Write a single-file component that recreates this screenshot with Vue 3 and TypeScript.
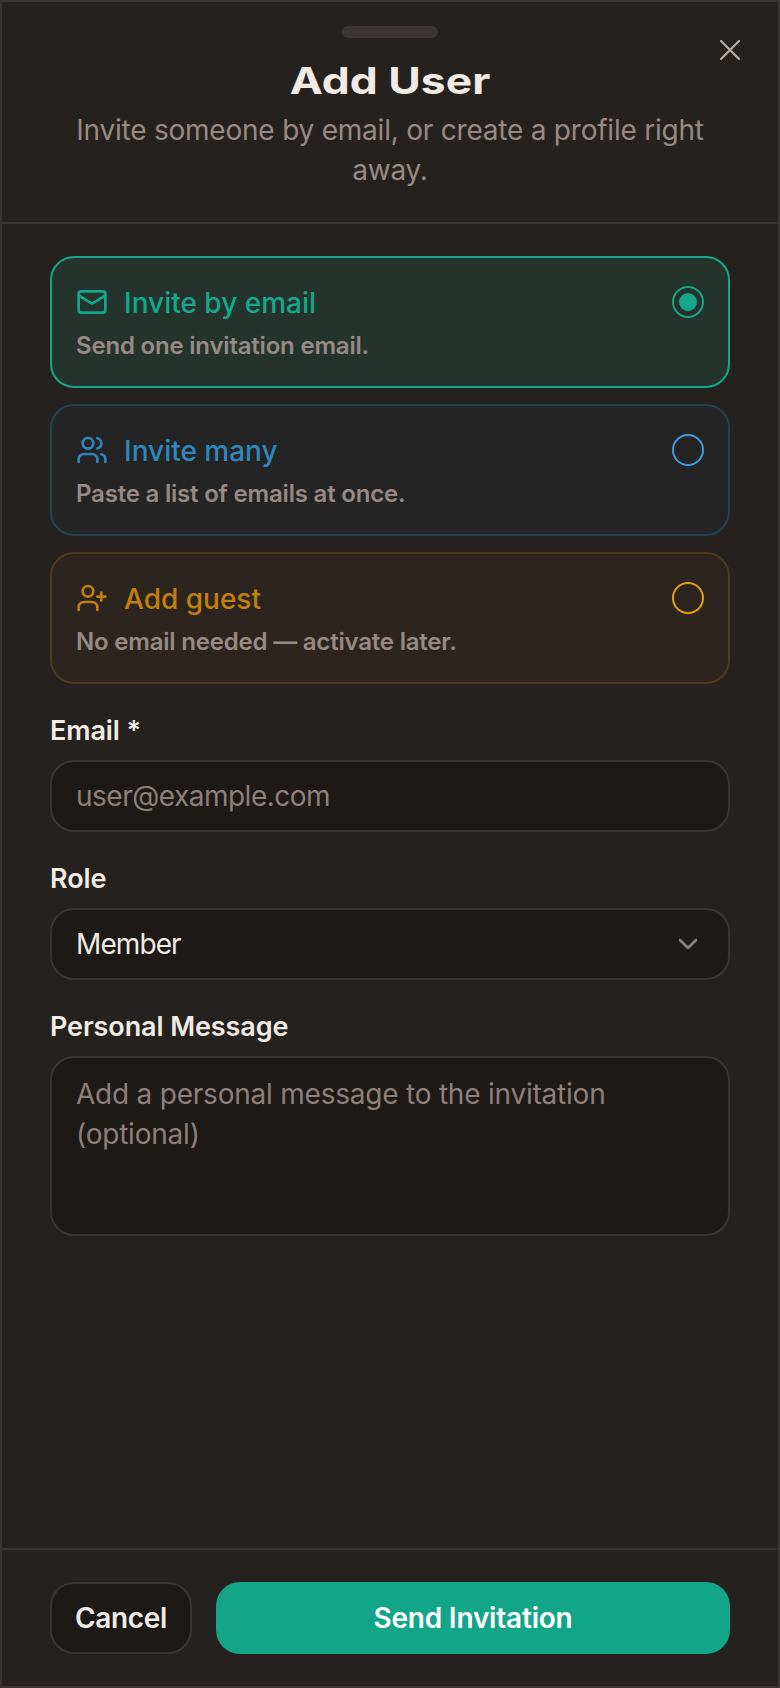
<template>
  <div class="sheet">
    <header class="sheet-header">
      <div class="handle"></div>
      <button class="close-btn" aria-label="Close">
        <svg viewBox="0 0 24 24" width="36" height="36" fill="none" stroke="currentColor" stroke-width="1.5" stroke-linecap="round">
          <path d="M18 6 6 18M6 6l12 12" />
        </svg>
      </button>
      <h1 class="title">Add User</h1>
      <p class="subtitle">Invite someone by email, or create a profile right away.</p>
    </header>

    <main class="sheet-body">
      <div class="modes">
        <div v-for="m in modes" :key="m.key" :class="['mode-card', m.key, { active: mode === m.key }]" @click="mode = m.key">
          <div class="mode-top">
            <svg class="mode-icon" viewBox="0 0 24 24" width="32" height="32" fill="none" stroke="currentColor" stroke-width="2" stroke-linecap="round" stroke-linejoin="round">
              <path v-for="d in m.paths" :key="d" :d="d" />
            </svg>
            <span class="mode-label">{{ m.label }}</span>
            <span class="radio"><span v-if="mode === m.key" class="radio-dot"></span></span>
          </div>
          <div class="mode-desc">{{ m.desc }}</div>
        </div>
      </div>

      <div class="field">
        <label class="field-label">Email *</label>
        <input class="control email-input" type="email" placeholder="user@example.com" />
      </div>

      <div class="field">
        <label class="field-label">Role</label>
        <div class="select-wrap">
          <select class="control select">
            <option>Member</option>
            <option>Admin</option>
          </select>
          <svg class="chevron" viewBox="0 0 24 24" width="32" height="32" fill="none" stroke="currentColor" stroke-width="2" stroke-linecap="round" stroke-linejoin="round">
            <path d="m6 9 6 6 6-6" />
          </svg>
        </div>
      </div>

      <div class="field">
        <label class="field-label">Personal Message</label>
        <textarea class="control textarea" placeholder="Add a personal message to the invitation (optional)"></textarea>
      </div>
    </main>

    <footer class="sheet-footer">
      <button class="btn cancel">Cancel</button>
      <button class="btn send">Send Invitation</button>
    </footer>
  </div>
</template>

<script setup lang="ts">
import { ref } from 'vue'

interface Mode {
  key: string
  label: string
  desc: string
  paths: string[]
}

const mode = ref('email')

const modes: Mode[] = [
  {
    key: 'email',
    label: 'Invite by email',
    desc: 'Send one invitation email.',
    paths: ['M4 4h16a2 2 0 0 1 2 2v12a2 2 0 0 1-2 2H4a2 2 0 0 1-2-2V6a2 2 0 0 1 2-2Z', 'm22 7-8.97 5.7a1.94 1.94 0 0 1-2.06 0L2 7']
  },
  {
    key: 'many',
    label: 'Invite many',
    desc: 'Paste a list of emails at once.',
    paths: ['M16 21v-2a4 4 0 0 0-4-4H6a4 4 0 0 0-4 4v2', 'M9 3a4 4 0 1 0 0 8 4 4 0 0 0 0-8Z', 'M22 21v-2a4 4 0 0 0-3-3.87', 'M16 3.13a4 4 0 0 1 0 7.75']
  },
  {
    key: 'guest',
    label: 'Add guest',
    desc: 'No email needed — activate later.',
    paths: ['M16 21v-2a4 4 0 0 0-4-4H6a4 4 0 0 0-4 4v2', 'M9 3a4 4 0 1 0 0 8 4 4 0 0 0 0-8Z', 'M19 8v6', 'M22 11h-6']
  }
]
</script>

<style>
body {
  margin: 0;
  background: #25211e;
}
</style>

<style scoped>
.sheet {
  box-sizing: border-box;
  width: 780px;
  height: 1688px;
  display: flex;
  flex-direction: column;
  background: #25211e;
  border: 2px solid #3a3532;
  font-family: Inter, "Noto Sans", sans-serif;
  color: #f0ebe5;
}

.sheet-header {
  position: relative;
  box-sizing: border-box;
  height: 222px;
  flex-shrink: 0;
  padding: 24px 48px 0;
  text-align: center;
  border-bottom: 2px solid #3a3532;
}

.handle {
  width: 96px;
  height: 12px;
  margin: 0 auto;
  border-radius: 6px;
  background: #3d3633;
}

.close-btn {
  position: absolute;
  top: 30px;
  right: 30px;
  width: 36px;
  height: 36px;
  padding: 0;
  border: none;
  background: none;
  color: #b4aca6;
}

.title {
  margin: 21px 0 0;
  font-size: 37px;
  line-height: 44px;
  font-weight: 700;
  color: #f0ebe5;
  transform: scaleX(1.2);
}

.subtitle {
  margin: 7px 0 0;
  font-size: 28px;
  line-height: 40px;
  letter-spacing: -0.22px;
  color: #978a84;
}

.sheet-body {
  flex: 1;
  padding: 32px 48px;
  display: flex;
  flex-direction: column;
  gap: 28px;
}

.modes {
  display: flex;
  flex-direction: column;
  gap: 16px;
}

.mode-card {
  box-sizing: border-box;
  height: 132px;
  padding: 28px 24px 0;
  border: 2px solid;
  border-radius: 24px;
}

.mode-card.email {
  background: #25332d;
  border-color: #14a88a;
  color: #14a88a;
}

.mode-card.many {
  background: #242424;
  border-color: #23404f;
  color: #2d87bd;
}

.mode-card.guest {
  background: #2c241e;
  border-color: #4f3a1c;
  color: #c27f0e;
}

.mode-top {
  display: flex;
  align-items: center;
  gap: 16px;
}

.mode-icon {
  flex-shrink: 0;
}

.mode-label {
  flex: 1;
  height: 32px;
  font-size: 28px;
  line-height: 34px;
  font-weight: 500;
}

.radio {
  box-sizing: border-box;
  width: 32px;
  height: 32px;
  display: flex;
  align-items: center;
  justify-content: center;
  border: 2px solid currentColor;
  border-radius: 50%;
}

.many .radio {
  color: #38a0e0;
}

.guest .radio {
  color: #e8a00f;
}

.radio-dot {
  width: 18px;
  height: 18px;
  border-radius: 50%;
  background: currentColor;
}

.mode-desc {
  margin-top: 12px;
  font-size: 24px;
  line-height: 32px;
  font-weight: 600;
  letter-spacing: -0.2px;
  color: #978a84;
}

.field {
  display: flex;
  flex-direction: column;
  gap: 10px;
}

.field-label {
  font-size: 27px;
  line-height: 38px;
  font-weight: 600;
  letter-spacing: -0.1px;
  color: #f0ebe5;
}

.control {
  box-sizing: border-box;
  width: 100%;
  height: 72px;
  padding: 0 24px;
  border: 2px solid #3a3532;
  border-radius: 24px;
  background: #1c1917;
  font-family: inherit;
  font-size: 28px;
  color: #f0ebe5;
  outline: none;
}

.control::placeholder {
  color: #8d807a;
  opacity: 1;
}

.email-input {
  letter-spacing: -0.5px;
}

.select-wrap {
  position: relative;
}

.select {
  appearance: none;
  letter-spacing: -0.9px;
}

.chevron {
  position: absolute;
  top: 20px;
  right: 26px;
  color: #8a807a;
}

.textarea {
  height: 180px;
  padding: 16px 24px;
  line-height: 40px;
  letter-spacing: -0.22px;
  resize: none;
}

.sheet-footer {
  flex-shrink: 0;
  display: flex;
  gap: 24px;
  padding: 32px 48px;
  border-top: 2px solid #3a3532;
}

.btn {
  height: 72px;
  border-radius: 24px;
  font-family: inherit;
  font-size: 28px;
  font-weight: 600;
}

.cancel {
  box-sizing: border-box;
  width: 142px;
  background: #1c1917;
  border: 2px solid #3a3532;
  color: #f0ebe5;
  letter-spacing: -0.3px;
}

.send {
  flex: 1;
  border: none;
  background: #12a587;
  color: #fff;
  letter-spacing: -0.2px;
}
</style>
